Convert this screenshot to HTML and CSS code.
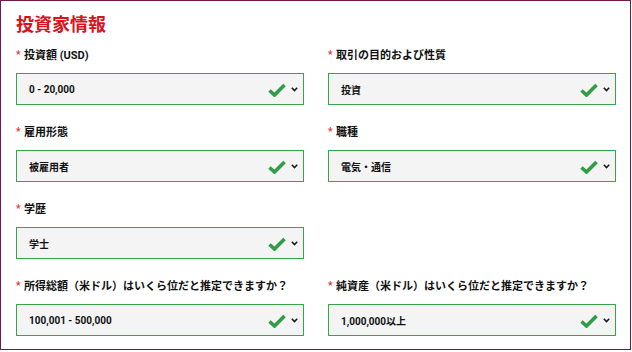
FILE: index.html
```html
<!DOCTYPE html>
<html lang="ja">
<head>
<meta charset="utf-8">
<title>投資家情報</title>
<link rel="stylesheet" href="styles.css">
</head>
<body>
<div class="panel">
  <h1 class="title">投資家情報</h1>
  <div class="grid">
    <div class="field">
      <div class="label"><span class="req">*</span>投資額 (USD)</div>
      <div class="select"><span class="value">0 - 20,000</span>
        <svg class="check" width="18" height="14" viewBox="0 0 18 14"><path d="M1.5 7.5 L6.5 12 L16.5 2" fill="none" stroke="#2f9d45" stroke-width="3.6"/></svg>
        <svg class="chev" width="7" height="5" viewBox="0 0 7 5"><path d="M0.8 0.8 L3.5 3.6 L6.2 0.8" fill="none" stroke="#1a1a1a" stroke-width="1.6"/></svg>
      </div>
    </div>
    <div class="field">
      <div class="label"><span class="req">*</span>取引の目的および性質</div>
      <div class="select"><span class="value">投資</span>
        <svg class="check" width="18" height="14" viewBox="0 0 18 14"><path d="M1.5 7.5 L6.5 12 L16.5 2" fill="none" stroke="#2f9d45" stroke-width="3.6"/></svg>
        <svg class="chev" width="7" height="5" viewBox="0 0 7 5"><path d="M0.8 0.8 L3.5 3.6 L6.2 0.8" fill="none" stroke="#1a1a1a" stroke-width="1.6"/></svg>
      </div>
    </div>
    <div class="field">
      <div class="label"><span class="req">*</span>雇用形態</div>
      <div class="select"><span class="value">被雇用者</span>
        <svg class="check" width="18" height="14" viewBox="0 0 18 14"><path d="M1.5 7.5 L6.5 12 L16.5 2" fill="none" stroke="#2f9d45" stroke-width="3.6"/></svg>
        <svg class="chev" width="7" height="5" viewBox="0 0 7 5"><path d="M0.8 0.8 L3.5 3.6 L6.2 0.8" fill="none" stroke="#1a1a1a" stroke-width="1.6"/></svg>
      </div>
    </div>
    <div class="field">
      <div class="label"><span class="req">*</span>職種</div>
      <div class="select"><span class="value">電気・通信</span>
        <svg class="check" width="18" height="14" viewBox="0 0 18 14"><path d="M1.5 7.5 L6.5 12 L16.5 2" fill="none" stroke="#2f9d45" stroke-width="3.6"/></svg>
        <svg class="chev" width="7" height="5" viewBox="0 0 7 5"><path d="M0.8 0.8 L3.5 3.6 L6.2 0.8" fill="none" stroke="#1a1a1a" stroke-width="1.6"/></svg>
      </div>
    </div>
    <div class="field">
      <div class="label"><span class="req">*</span>学歴</div>
      <div class="select"><span class="value">学士</span>
        <svg class="check" width="18" height="14" viewBox="0 0 18 14"><path d="M1.5 7.5 L6.5 12 L16.5 2" fill="none" stroke="#2f9d45" stroke-width="3.6"/></svg>
        <svg class="chev" width="7" height="5" viewBox="0 0 7 5"><path d="M0.8 0.8 L3.5 3.6 L6.2 0.8" fill="none" stroke="#1a1a1a" stroke-width="1.6"/></svg>
      </div>
    </div>
    <div class="field empty"></div>
    <div class="field">
      <div class="label"><span class="req">*</span>所得総額（米ドル）はいくら位だと推定できますか？</div>
      <div class="select"><span class="value">100,001 - 500,000</span>
        <svg class="check" width="18" height="14" viewBox="0 0 18 14"><path d="M1.5 7.5 L6.5 12 L16.5 2" fill="none" stroke="#2f9d45" stroke-width="3.6"/></svg>
        <svg class="chev" width="7" height="5" viewBox="0 0 7 5"><path d="M0.8 0.8 L3.5 3.6 L6.2 0.8" fill="none" stroke="#1a1a1a" stroke-width="1.6"/></svg>
      </div>
    </div>
    <div class="field">
      <div class="label"><span class="req">*</span>純資産（米ドル）はいくら位だと推定できますか？</div>
      <div class="select"><span class="value">1,000,000以上</span>
        <svg class="check" width="18" height="14" viewBox="0 0 18 14"><path d="M1.5 7.5 L6.5 12 L16.5 2" fill="none" stroke="#2f9d45" stroke-width="3.6"/></svg>
        <svg class="chev" width="7" height="5" viewBox="0 0 7 5"><path d="M0.8 0.8 L3.5 3.6 L6.2 0.8" fill="none" stroke="#1a1a1a" stroke-width="1.6"/></svg>
      </div>
    </div>
  </div>
</div>
</body>
</html>
```
FILE: styles.css
```css
* { box-sizing: border-box; }
html, body { margin: 0; padding: 0; background: #fff; }
body {
  font-family: Roboto, "Noto Sans CJK JP", sans-serif;
  color: #111;
}
.panel {
  width: 631px;
  height: 350px;
  border: 1px solid #6e1c47;
  padding: 10px 14px 0 15px;
}
.title {
  margin: 0;
  font-size: 18px;
  line-height: 24px;
  font-weight: 700;
  color: #d7141d;
  font-family: "Noto Sans CJK JP", sans-serif;
}
.grid {
  margin-top: 13px;
  display: grid;
  grid-template-columns: 288px 288px;
  column-gap: 24px;
  row-gap: 20px;
}
.label {
  font-size: 11px;
  line-height: 16px;
  font-weight: 700;
  margin-bottom: 9px;
  white-space: nowrap;
  display: flex;
  align-items: center;
}
.req {
  color: #e0353c;
  font-size: 10px;
  width: 8px;
  margin-top: -2px;
}
.select {
  height: 32px;
  border: 1px solid #35a54a;
  background: #f4f4f4;
  display: flex;
  align-items: center;
  padding: 0 5px 0 12px;
}
.value {
  flex: 1;
  font-size: 10px;
  font-weight: 700;
  color: #111;
}
.check { margin-right: 5px; margin-top: 1px; }
.chev { margin-top: 1px; }
```
